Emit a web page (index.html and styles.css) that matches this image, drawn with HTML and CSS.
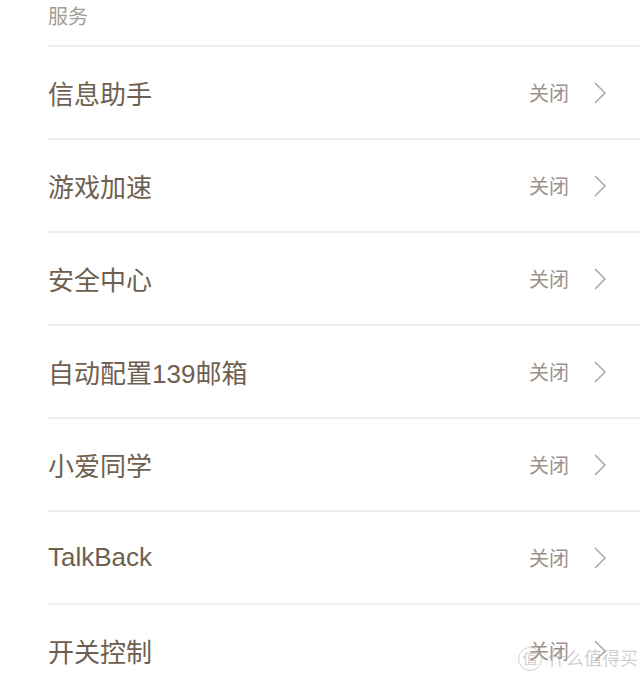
FILE: index.html
```html
<!DOCTYPE html>
<html>
<head>
<meta charset="utf-8">
<title>服务</title>
<link rel="stylesheet" href="styles.css">
</head>
<body>
<div class="section-title">服务</div>
<ul class="settings">
  <li class="row"><span class="label">信息助手</span><span class="value">关闭</span><svg class="chev" viewBox="0 0 14 24"><path d="M2 2 L12 12 L2 22"/></svg></li>
  <li class="row"><span class="label">游戏加速</span><span class="value">关闭</span><svg class="chev" viewBox="0 0 14 24"><path d="M2 2 L12 12 L2 22"/></svg></li>
  <li class="row"><span class="label">安全中心</span><span class="value">关闭</span><svg class="chev" viewBox="0 0 14 24"><path d="M2 2 L12 12 L2 22"/></svg></li>
  <li class="row"><span class="label">自动配置139邮箱</span><span class="value">关闭</span><svg class="chev" viewBox="0 0 14 24"><path d="M2 2 L12 12 L2 22"/></svg></li>
  <li class="row"><span class="label">小爱同学</span><span class="value">关闭</span><svg class="chev" viewBox="0 0 14 24"><path d="M2 2 L12 12 L2 22"/></svg></li>
  <li class="row"><span class="label">TalkBack</span><span class="value">关闭</span><svg class="chev" viewBox="0 0 14 24"><path d="M2 2 L12 12 L2 22"/></svg></li>
  <li class="row"><span class="label">开关控制</span><span class="value">关闭</span><svg class="chev" viewBox="0 0 14 24"><path d="M2 2 L12 12 L2 22"/></svg></li>
</ul>
<div class="watermark"><span class="wm-badge">值</span>什么值得买</div>
</body>
</html>
```
FILE: styles.css
```css
body {
  margin: 0;
  background-color: white;
  font-family: "Liberation Sans", "Noto Sans CJK SC", sans-serif;
  height: 684px;
  overflow: hidden;
  position: relative;
}

.section-title {
  height: 45px;
  padding-left: 48px;
  font-size: 20px;
  line-height: 34px;
  color: #a49d96;
}

.settings {
  list-style: none;
  margin: 0;
  padding: 0 0 0 48px;
}

.row {
  display: flex;
  align-items: center;
  height: 91px;
  border-top: 2px solid #eeeeee;
}

.label {
  flex: 1;
  font-size: 26px;
  color: #6e5f50;
}

.value {
  font-size: 20px;
  color: #9b928b;
  margin-right: 24px;
}

.chev {
  width: 14px;
  height: 24px;
  margin-right: 33px;
}

.chev path {
  fill: none;
  stroke: #b0aba6;
  stroke-width: 1.6;
}

.watermark {
  position: absolute;
  left: 518px;
  top: 647px;
  font-size: 18px;
  line-height: 24px;
  color: rgba(175, 175, 175, 0.6);
  display: flex;
  align-items: center;
  gap: 6px;
}

.wm-badge {
  font-size: 15px;
  width: 22px;
  height: 22px;
  border: 1.5px solid rgba(175, 175, 175, 0.6);
  border-radius: 50%;
  display: inline-flex;
  align-items: center;
  justify-content: center;
}
```
